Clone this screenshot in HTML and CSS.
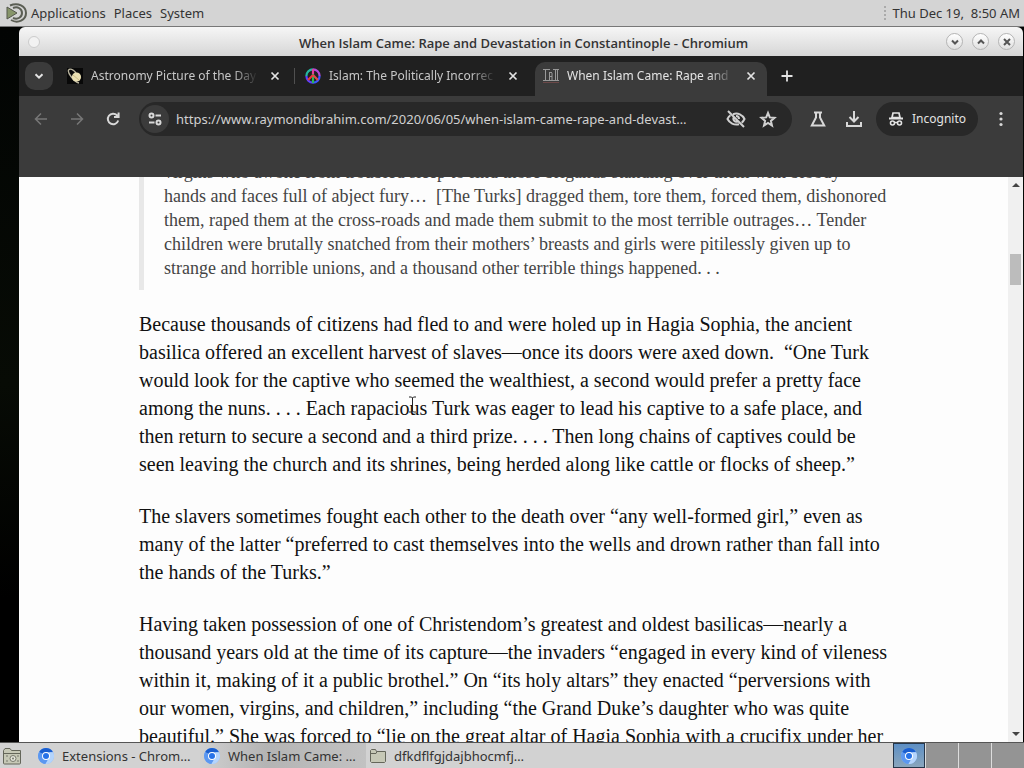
FILE: index.html
```html
<!DOCTYPE html>
<html lang="en">
<head>
<meta charset="utf-8">
<title>When Islam Came: Rape and Devastation in Constantinople - Chromium</title>
<link rel="stylesheet" href="styles.css">
</head>
<body>
<svg class="defs" aria-hidden="true">
  <symbol id="close" viewBox="0 0 10 10"><path d="M1.5 1.5l7 7M8.500 1.500l-7 7" fill="none" stroke="currentColor" stroke-width="1.700"/></symbol>
  <symbol id="chromium" viewBox="0 0 16 16">
    <circle cx="8" cy="8" r="8" fill="#8ab8f8"/>
    <path d="M8 8L1.100 4A8 8 0 0 1 15 4.200H8z" fill="#1a5fd0"/>
    <path d="M1.100 4A8 8 0 0 0 7.500 16L11 10z" fill="#5b97f0"/>
    <path d="M15 4.200A8 8 0 0 1 7.500 16L11.400 9V4.200z" fill="#b4d4fc"/>
    <circle cx="8" cy="8" r="4" fill="#fff"/><circle cx="8" cy="8" r="3" fill="#2672e8"/>
  </symbol>
</svg>
<header class="panel">
  <svg class="mate" viewBox="0 0 22 20"><path d="M1 4l10 6-10 6z" fill="#87956a" stroke="#55584d"/><path d="M4 2.500C12-1 20 3 20 10s-8 11-15 7" fill="none" stroke="#5b5e54" stroke-width="2"/><path d="M7 5c5-2 9 1 9 5s-4 7-9 5" fill="none" stroke="#5b5e54" stroke-width="2"/></svg>
  <nav class="menus"><button>Applications</button><button>Places</button><button>System</button></nav>
  <span class="grip"></span>
  <time class="clock">Thu Dec 19,&nbsp; 8:50 AM</time>
</header>
<main class="desktop">
  <section class="window">
    <div class="titlebar">
      <button class="orb orb-menu" aria-label="Window menu"></button>
      <h1>When Islam Came: Rape and Devastation in Constantinople - Chromium</h1>
      <div class="controls">
        <button class="orb" aria-label="Minimize"><svg viewBox="0 0 10 10"><path d="M2 3.500l3 3 3-3"/></svg></button>
        <button class="orb" aria-label="Maximize"><svg viewBox="0 0 10 10"><path d="M2 6.500l3-3 3 3"/></svg></button>
        <button class="orb" aria-label="Close"><svg viewBox="0 0 10 10"><path d="M2 2l6 6M8 2l-6 6"/></svg></button>
      </div>
    </div>
    <div class="tabstrip">
      <button class="tabsearch" aria-label="Search tabs"><svg viewBox="0 0 12 12"><path d="M2.500 4.200L6 7.700l3.500-3.500" fill="none" stroke="#e3e3e3" stroke-width="2"/></svg></button>
      <div class="tab">
        <svg class="fav" viewBox="0 0 16 16"><path d="M0 0h16v16H0z" fill="#080808"/><path d="M2 1.500Q0 3 4 8.500T12 15M2 1.500Q5 0 9 5" fill="none" stroke="#b8b39d" stroke-width="1.400"/><circle cx="9.500" cy="9" r="4.600" fill="#eadfb2"/><path d="M6 7l6 5" stroke="#cdbd88"/></svg>
        <span class="label">Astronomy Picture of the Day</span>
        <button class="x" aria-label="Close tab"><svg><use href="#close"/></svg></button>
      </div>
      <span class="divider"></span>
      <div class="tab">
        <svg class="fav" viewBox="0 0 16 16"><g fill="none" stroke-width="2.200"><path d="M8 1.400A6.600 6.600 0 0 0 1.400 8" stroke="#24b8a2"/><path d="M8 1.400A6.600 6.600 0 0 1 14.600 8" stroke="#b04bd8"/><path d="M1.400 8A6.600 6.600 0 0 0 8 14.600" stroke="#5b3fff"/><path d="M14.600 8A6.600 6.600 0 0 1 8 14.600" stroke="#3a58ff"/><path d="M8 1v5" stroke="#e83b9c"/><path d="M8 6v9" stroke="#28bb55"/><path d="M8 7l-5 5" stroke="#ec3838"/><path d="M8 7l5 5" stroke="#e34848"/></g></svg>
        <span class="label">Islam: The Politically Incorrec</span>
        <button class="x" aria-label="Close tab"><svg><use href="#close"/></svg></button>
      </div>
      <div class="tab active">
        <svg class="fav" viewBox="0 0 16 16" fill="none" stroke="#999"><path d="M0 1.500h7M0 12.500h16M2.500 2v10M6.500 4v8M6 4.500h3M6 8.500h3M9 5v7M12.500 2v10M10 1.500h6M14.500 2v10"/><path d="M0 14.500h16" stroke="#6b4848"/></svg>
        <span class="label">When Islam Came: Rape and</span>
        <button class="x" aria-label="Close tab"><svg><use href="#close"/></svg></button>
      </div>
      <button class="newtab" aria-label="New tab"><svg viewBox="0 0 12 12"><path d="M6 .5v11M.5 6h11" stroke="#e3e3e3" stroke-width="1.800"/></svg></button>
    </div>
    <div class="chrome">
      <div class="toolbar">
        <button class="tool dim" aria-label="Back"><svg viewBox="0 0 16 16"><path d="M14 8H3M8 2.500L2.500 8 8 13.500"/></svg></button>
        <button class="tool dim" aria-label="Forward"><svg viewBox="0 0 16 16"><path d="M2 8h11M8 2.500L13.500 8 8 13.500"/></svg></button>
        <button class="tool" aria-label="Reload"><svg viewBox="0 0 16 16"><path d="M13.200 9.500A5.300 5.300 0 1 1 12 4.300L13.500 6M13.600 1.500V6H9"/></svg></button>
        <div class="omnibox">
          <button class="site" aria-label="Site information"><svg viewBox="0 0 16 16"><circle cx="4.500" cy="4.500" r="2"/><path d="M8.500 4.500H14M2 11.500h5.500"/><circle cx="11.500" cy="11.500" r="2"/></svg></button>
          <input class="url" aria-label="Address" value="https://www.raymondibrahim.com/2020/06/05/when-islam-came-rape-and-devast…">
          <button class="mini" aria-label="Third-party cookies blocked"><svg viewBox="0 0 20 20"><path d="M2 2l16 16M7 5.200C12 3.500 16.500 5.800 18.500 10c-.7 1.500-1.600 2.700-2.800 3.700M13 15.200C8 16.500 3.500 14 1.500 10 2.200 8.500 3.100 7.300 4.400 6.300M8 8a3 3 0 0 0 4 4.300M10 7a3 3 0 0 1 3 3"/></svg></button>
          <button class="mini" aria-label="Bookmark"><svg viewBox="0 0 20 20"><path d="M10 4l1.800 4.400 4.700.4-3.600 3.100 1.100 4.600L10 14l-4 2.500 1.100-4.600-3.600-3.100 4.700-.4z"/></svg></button>
        </div>
        <button class="tool flask" aria-label="Experiments"><svg viewBox="0 0 16 16"><path d="M4 1.500h8M6 1.500v5L1.800 14.500h12.400L10 6.500v-5"/></svg></button>
        <button class="tool" aria-label="Downloads"><svg viewBox="0 0 16 16"><path d="M8 0v10.500M3.500 6L8 10.500 12.500 6M1 11v4h14v-4"/></svg></button>
        <button class="incognito"><svg viewBox="0 0 16 16"><path d="M4 6.500L5 2h6l1 4.500z" fill="none" stroke="#e3e3e3" stroke-width="1.700"/><path d="M1 7.500h14" stroke="#e3e3e3" stroke-width="2"/><g fill="none" stroke="#e3e3e3" stroke-width="1.600"><circle cx="4.500" cy="12" r="2"/><circle cx="11.500" cy="12" r="2"/><path d="M6.500 11.500h3"/></g></svg>Incognito</button>
        <button class="tool" aria-label="Menu"><svg viewBox="0 0 16 16" class="dots"><circle cx="8" cy="2.500" r="1.600"/><circle cx="8" cy="8" r="1.600"/><circle cx="8" cy="13.500" r="1.600"/></svg></button>
      </div>
    </div>
    <div class="page">
      <article class="article">
        <blockquote>virgins who awoke from troubled sleep to find those brigands standing over them with bloody<br>
hands and faces full of abject fury…&nbsp; [The Turks] dragged them, tore them, forced them, dishonored<br>
them, raped them at the cross-roads and made them submit to the most terrible outrages… Tender<br>
children were brutally snatched from their mothers’ breasts and girls were pitilessly given up to<br>
strange and horrible unions, and a thousand other terrible things happened. . .</blockquote>
        <p>Because thousands of citizens had fled to and were holed up in Hagia Sophia, the ancient<br>
basilica offered an excellent harvest of slaves—once its doors were axed down.&nbsp; “One Turk<br>
would look for the captive who seemed the wealthiest, a second would prefer a pretty face<br>
among the nuns. . . . Each rapacious Turk was eager to lead his captive to a safe place, and<br>
then return to secure a second and a third prize. . . . Then long chains of captives could be<br>
seen leaving the church and its shrines, being herded along like cattle or flocks of sheep.”</p>
        <p>The slavers sometimes fought each other to the death over “any well-formed girl,” even as<br>
many of the latter “preferred to cast themselves into the wells and drown rather than fall into<br>
the hands of the Turks.”</p>
        <p>Having taken possession of one of Christendom’s greatest and oldest basilicas—nearly a<br>
thousand years old at the time of its capture—the invaders “engaged in every kind of vileness<br>
within it, making of it a public brothel.” On “its holy altars” they enacted “perversions with<br>
our women, virgins, and children,” including “the Grand Duke’s daughter who was quite<br>
beautiful.” She was forced to “lie on the great altar of Hagia Sophia with a crucifix under her</p>
      </article>
      <div class="scrollbar">
        <svg viewBox="0 0 10 6"><path d="M1 5l4-4 4 4z"/></svg>
        <span class="thumb"></span>
        <svg viewBox="0 0 10 6"><path d="M1 1l4 4 4-4z"/></svg>
      </div>
      <svg class="ibeam" viewBox="0 0 9 17"><path d="M1 1h2.500l1 1 1-1H8M1 16h2.500l1-1 1 1H8M4.500 2v13" fill="none" stroke="#222"/></svg>
    </div>
  </section>
</main>
<footer class="taskbar">
  <button class="show" aria-label="Show desktop"><svg viewBox="0 0 20 18"><path d="M1.500 16V3.500l1.500-2h5l1.500 2h9V16q0 1-1 1h-15q-1 0-1-1z" fill="#c6c8b6" stroke="#64665a"/><path d="M2 6.500h16" stroke="#64665a"/><circle cx="11" cy="11.500" r="3" fill="#e4e5dc" stroke="#77796c"/><circle cx="11" cy="11.500" r="1" fill="#77796c"/><path d="M4 9h2M4 14h2M15 9h2M15 14h2" stroke="#77796c"/></svg></button>
  <button class="task"><svg viewBox="0 0 16 16"><use href="#chromium"/></svg><span>Extensions - Chrom…</span></button>
  <button class="task current"><svg viewBox="0 0 16 16"><use href="#chromium"/></svg><span>When Islam Came: …</span></button>
  <button class="task"><svg viewBox="0 0 16 16"><path d="M.5 13.500v-11l1-1h4l1 2h9v10l-1 1h-13z" fill="#c6c8b6" stroke="#64665a"/><path d="M1 5.500h5l1-2" fill="none" stroke="#64665a"/></svg><span>dfkdflfgjdajbhocmfj…</span></button>
  <div class="spaces">
    <button class="on" aria-label="Workspace 1"><svg viewBox="0 0 16 16"><use href="#chromium"/></svg></button>
    <button aria-label="Workspace 2"></button><button aria-label="Workspace 3"></button><button aria-label="Workspace 4"></button>
  </div>
</footer>
</body>
</html>
```

FILE: styles.css
```css
* { box-sizing: border-box; }
body {
  margin: 0;
  height: 100vh;
  display: flex;
  flex-direction: column;
  overflow: hidden;
  background: #020403;
  font: 13px/20px "Noto Sans", sans-serif;
  color: #333;
}
button { border: 0; padding: 0; background: none; font: inherit; color: inherit; }
svg { display: block; flex: none; }
.defs { position: absolute; width: 0; height: 0; }

.panel {
  flex: none;
  height: 27px;
  display: flex;
  align-items: center;
  padding: 0 4px 0 6px;
  background: #d4d4d4;
  border-bottom: 1px solid #777;
}
.mate { width: 22px; height: 20px; margin-right: 3px; }
.menus { display: flex; gap: 8px; flex: 1; }
.grip { width: 4px; height: 14px; margin-right: 4px; border-left: 2px dotted #aaa; }

.desktop { flex: 1; min-height: 0; display: flex; padding: 0 1px 0 19px; background: linear-gradient(#020403, #070b05 50%, #000 80%); }
.window {
  flex: 1;
  min-width: 0;
  display: flex;
  flex-direction: column;
  border-radius: 6px 6px 0 0;
  overflow: hidden;
  background: #202020;
}
.titlebar {
  flex: none;
  height: 29px;
  display: grid;
  grid-template-columns: 86px 1fr 80px;
  align-items: center;
  padding: 0 8px 0 7px;
  background: linear-gradient(#f6f6f6, #d6d6d6);
}
.titlebar h1 { margin: 3px 0 0; font: 600 13px/20px "Open Sans", "Noto Sans", sans-serif; text-align: center; white-space: nowrap; }
.controls { display: flex; justify-content: flex-end; gap: 9px; }
.orb {
  width: 17px;
  height: 17px;
  display: grid;
  place-items: center;
  border: 1px solid #b4b4b4;
  border-radius: 50%;
  background: linear-gradient(#fff, #e0e0e0);
}
.orb svg { width: 10px; height: 10px; fill: none; stroke: #555; stroke-width: 2; }
.orb-menu { width: 12px; height: 12px; margin-left: 2px; border-color: #ccc; background: #f2f2f2; }

.tabstrip { flex: none; height: 40px; display: flex; align-items: flex-end; padding-left: 6px; background: #202020; color: #e3e3e3; }
.tabsearch { width: 28px; height: 28px; margin: 0 6px 6px 0; border-radius: 10px; display: grid; place-items: center; background: #3b3b3b; }
.tabsearch svg, .newtab svg { width: 12px; height: 12px; }
.tab {
  flex: 0 1 232px;
  min-width: 0;
  height: 34px;
  display: flex;
  align-items: center;
  gap: 8px;
  padding: 0 7px 6px 8px;
  font-size: 12px;
  color: #c7c7c7;
}
.tab + .tab { margin-left: 6px; }
.divider { width: 1px; height: 16px; margin: 0 2px 12px 3px; background: #505050; }
.active { border-radius: 10px 10px 0 0; background: #3b3b3b; color: #e3e3e3; }
.fav { width: 16px; height: 16px; }
.label {
  flex: 1;
  min-width: 0;
  white-space: nowrap;
  -webkit-mask-image: linear-gradient(90deg, #000 85%, transparent);
  mask-image: linear-gradient(90deg, #000 85%, transparent);
}
.x { width: 18px; height: 18px; display: grid; place-items: center; color: #e3e3e3; }
.x svg { width: 10px; height: 10px; }
.newtab { width: 28px; height: 28px; margin: 0 0 6px 6px; display: grid; place-items: center; }

.chrome { flex: none; height: 81px; background: #3b3b3b; }
.toolbar { height: 46px; display: flex; align-items: center; padding: 0 4px; }
.tool { width: 36px; height: 34px; display: grid; place-items: center; color: #d8d8d8; }
.tool svg { width: 16px; height: 16px; fill: none; stroke: currentColor; stroke-width: 2; }
.tool .dots { fill: currentColor; stroke: none; }
.dim { color: #777; }
.dim svg { stroke-width: 1.5; }
.flask { margin-left: 8px; }
.omnibox { flex: 1; min-width: 0; height: 34px; margin-left: 8px; display: flex; align-items: center; padding: 0 8px 0 2px; border-radius: 17px; background: #282828; }
.site { width: 28px; height: 28px; border-radius: 50%; display: grid; place-items: center; background: #3b3b3b; }
.site svg { width: 16px; height: 16px; fill: none; stroke: #d8d8d8; stroke-width: 2; }
.url { flex: 1; min-width: 0; height: 28px; margin: 0 0 0 7px; padding: 0; border: 0; outline: 0; background: none; font: 13px/20px "Noto Sans", sans-serif; color: #d0d0d0; }
.mini { width: 32px; height: 28px; display: grid; place-items: center; }
.mini svg { width: 20px; height: 20px; fill: none; stroke: #d0d0d0; stroke-width: 2; }
.incognito { height: 34px; margin: 0 5px 0 4px; padding: 0 12px; display: flex; align-items: center; gap: 8px; border-radius: 17px; background: #282828; color: #e3e3e3; font-size: 12px; }
.incognito svg { width: 16px; height: 16px; }

.page { position: relative; flex: 1; min-height: 0; display: flex; overflow: hidden; background: #fdfdfd; }
.article { flex: 1; min-width: 0; padding-left: 120px; margin-top: -17px; font: 20px/28px "Liberation Serif", serif; color: #111; white-space: nowrap; }
blockquote { margin: 0; padding: 0 0 10px 20px; border-left: 5px solid #e8e8e8; font-size: 18px; line-height: 24px; color: #444; }
.article p { margin: 0 0 24px; }
blockquote + p { padding-top: 20px; }
.scrollbar { width: 15px; display: flex; flex-direction: column; align-items: center; padding: 5px 0; background: #f0f0f0; }
.scrollbar svg { width: 10px; height: 6px; fill: #444; }
.thumb { width: 11px; height: 31px; margin: 66px 0 auto; background: #bcbcbc; }
.ibeam { position: absolute; left: 389px; top: 219px; width: 9px; height: 17px; }

.taskbar { flex: none; height: 26px; display: flex; align-items: center; border-top: 1px solid #555; background: #d2d2d2; }
.show { margin: 0 12px 0 2px; }
.show svg { width: 20px; height: 18px; }
.task { flex: 0 1 166px; height: 25px; display: flex; align-items: center; gap: 8px; padding-left: 4px; white-space: nowrap; }
.task svg, .spaces svg { width: 16px; height: 16px; }
.current { background: linear-gradient(90deg, #d0d0d0, #b4b4b4 40%, #c2c2c2); }
.spaces { display: grid; grid-template-columns: repeat(4, 32px); gap: 1px; height: 25px; margin-left: auto; background: #ddd; }
.spaces button { display: grid; place-items: center; background: #949494; }
.spaces .on { background: linear-gradient(#5d8fc4, #8aa6bd); border: 1px solid #25364a; }
```
